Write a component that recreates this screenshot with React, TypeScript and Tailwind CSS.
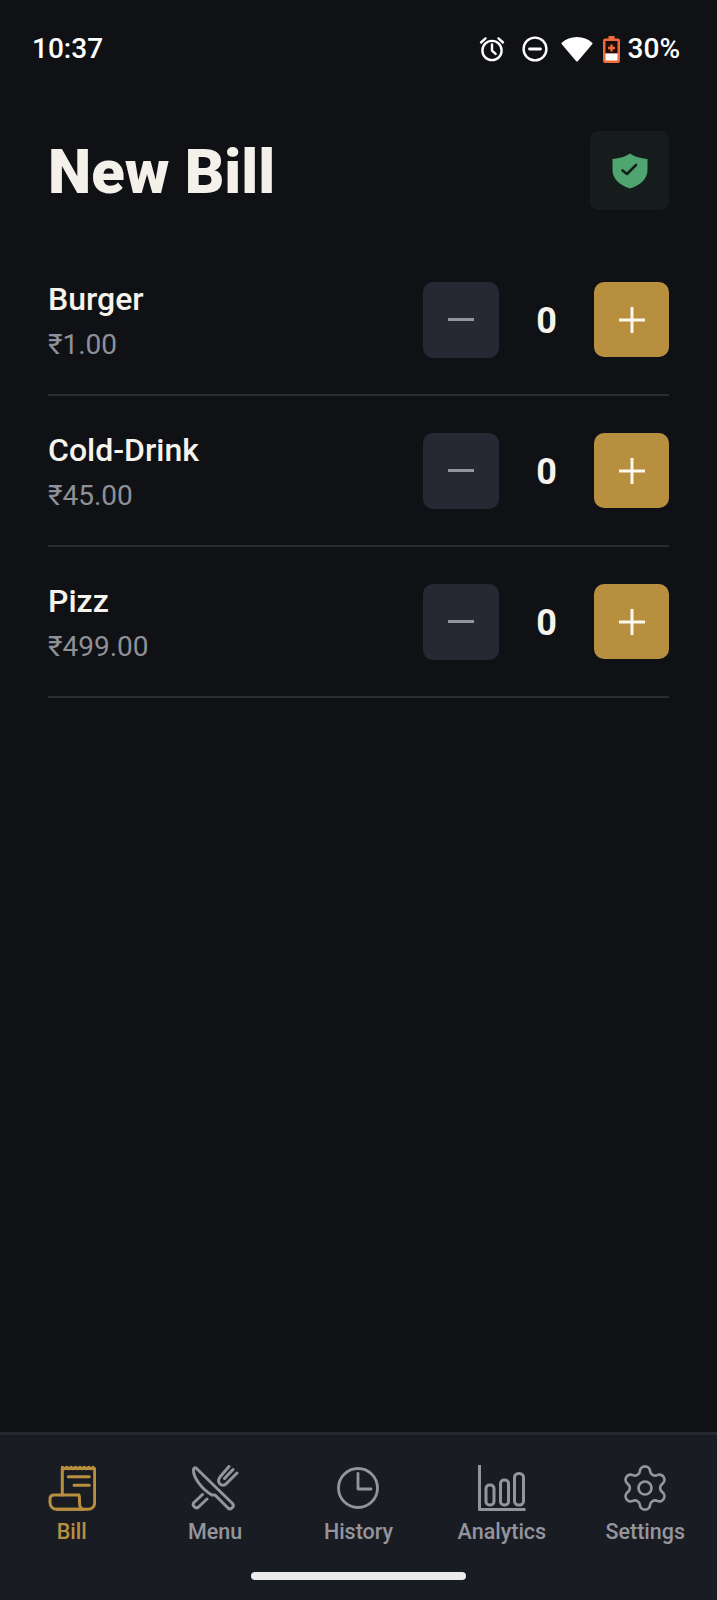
import { Settings } from 'lucide-react';

const items = [
  { name: 'Burger', price: '₹1.00' },
  { name: 'Cold-Drink', price: '₹45.00' },
  { name: 'Pizz', price: '₹499.00' },
];

function AlarmIcon() {
  return (
    <svg width="26" height="26" viewBox="0 0 26 26" fill="none" stroke="white" strokeWidth="2.4" strokeLinecap="round" strokeLinejoin="round">
      <circle cx="13" cy="14.5" r="9.6" />
      <path d="M13 8.5v6.2l3.6 3.2" />
      <path d="M2 6.500 6.500 2.400M24 6.500l-4.500-4.100" />
    </svg>
  );
}

function DndIcon() {
  return (
    <svg width="26" height="26" viewBox="0 0 26 26" fill="none" stroke="white" strokeWidth="2.4" strokeLinecap="round">
      <circle cx="13" cy="13" r="11.4" />
      <path d="M7.500 13h11" strokeWidth="2.8" />
    </svg>
  );
}

function WifiIcon() {
  return (
    <svg width="32" height="26" viewBox="0 0 32 26" fill="white">
      <path d="M16 1C10 1 4.800 3.200.8 6.800a1 1 0 0 0 0 1.400L15 25a1.400 1.400 0 0 0 2 0L31.200 8.200a1 1 0 0 0 0-1.400C27.200 3.200 22 1 16 1z" />
    </svg>
  );
}

function BatteryIcon() {
  return (
    <svg width="17" height="27" viewBox="0 0 17 27" fill="none">
      <path d="M5.500 0h6v2.500h3.500a2 2 0 0 1 2 2V25a2 2 0 0 1-2 2H2a2 2 0 0 1-2-2V4.500a2 2 0 0 1 2-2h3.500z" fill="#f0693a" />
      <rect x="2.500" y="5" width="12" height="12.500" fill="#1a0f0c" />
      <rect x="2.500" y="17.500" width="12" height="7" fill="#ffffff" />
      <path d="M8.500 8.500v7M5 12h7" stroke="#f0693a" strokeWidth="2.400" />
    </svg>
  );
}

function ShieldIcon() {
  return (
    <svg width="36" height="36" viewBox="0 0 36 36" fill="none">
      <path d="M18 .5C22 3.500 29 5.500 35.500 6V17C35.500 26 28 32.500 18 35.500 8 32.500.5 26 .5 17V6C7 5.500 14 3.500 18 .5z" fill="#4fa56f" />
      <path d="m10.500 17.500 4.500 3.500 9-9" stroke="#12201a" strokeWidth="2.600" strokeLinecap="round" strokeLinejoin="round" />
    </svg>
  );
}

function BillIcon() {
  return (
    <svg width="48" height="46" viewBox="0 0 48 46" fill="none" stroke="#b78f3f" strokeWidth="3" strokeLinecap="round" strokeLinejoin="round">
      <path d="M14.300 30V2.300l2.200 1.500 2.200-1.500 2.200 1.500 2.200-1.500 2.200 1.500 2.200-1.500 2.200 1.500 2.200-1.500 2.200 1.500 2.200-1.500 2.200 1.500 2.200-1.500 2.200 1.500 2.200-1.500 1.600 1.500V37c0 4.500-3 7.300-7 7.300H9" />
      <path d="M20.300 11.700h21M26 20.300h15.300" />
      <path d="M31 30H6c-2.500 0-4 1.500-4 4v3c0 4.500 3 7.300 7 7.300h26c-2.500-.8-3.500-3-3.500-6.500V34c0-2.500-.5-4-.5-4" />
    </svg>
  );
}

function MenuIcon() {
  return (
    <svg width="48" height="46" viewBox="0 0 48 46" fill="none" stroke="#94959c" strokeWidth="3" strokeLinecap="round" strokeLinejoin="round">
      <path d="M5 3 41.500 38.500a3.200 3.200 0 0 1-4.500 4.500L24 30h-3C12 25 2 13 2.500 4.500 2.700 3 4 2.400 5 3z" />
      <path d="M11.500 29.500 3 37.500a3.200 3.200 0 0 0 4.500 4.500l8.500-8" />
      <path d="M38 1.500 29 12c-2 3-2 5 0 7s4 1.500 6 0L46 8M42 4.500l-8.500 9" />
    </svg>
  );
}

function HistoryIcon() {
  return (
    <svg width="42" height="42" viewBox="0 0 42 42" fill="none" stroke="#94959c" strokeWidth="2.800" strokeLinecap="round" strokeLinejoin="round">
      <circle cx="21" cy="21" r="19.500" />
      <path d="M21 6.500V22h13" />
    </svg>
  );
}

function AnalyticsIcon() {
  return (
    <svg width="48" height="46" viewBox="0 0 48 46" fill="none" stroke="#94959c" strokeWidth="3" strokeLinecap="square" strokeLinejoin="round">
      <path d="M1.500 1v43.500H46" />
      <rect x="8" y="20" width="8" height="20" rx="3.500" />
      <rect x="22.500" y="15" width="8" height="25" rx="3.500" />
      <rect x="36.500" y="8.500" width="9" height="31.500" rx="4" />
    </svg>
  );
}

function NavItem({ label, active, icon }: { label: string; active?: boolean; icon: React.ReactNode }) {
  return (
    <div className="flex flex-col items-center">
      <div className="flex h-[46px] items-center justify-center">{icon}</div>
      <span className={`mt-[7px] text-[21.500px] leading-[28px] font-medium ${active ? 'text-[#b78f3f]' : 'text-[#94959c]'}`}>{label}</span>
    </div>
  );
}

function BillRow({ name, price }: { name: string; price: string }) {
  return (
    <div className="flex h-[151px] items-center justify-between border-b-2 border-[#2a2c33]">
      <div className="pt-[2px]">
        <p className="text-[32px] leading-[38px] font-medium text-[#f6f3ec]">{name}</p>
        <p className="mt-[10px] text-[28px] leading-[34px] text-[#8f9097]">{price}</p>
      </div>
      <div className="flex items-center">
        <button type="button" className="flex size-[76px] items-center justify-center rounded-[10px] bg-[#262933]">
          <span className="h-[3px] w-[26px] bg-[#94959c]" />
        </button>
        <span className="w-[95px] pt-[3px] text-center text-[36px] font-bold text-[#f6f3ec]">0</span>
        <button type="button" className="flex size-[75px] items-center justify-center rounded-[10px] bg-[#b78f3f]">
          <svg width="26" height="26" viewBox="0 0 26 26" stroke="#fbf8f0" strokeWidth="3">
            <path d="M13 0v26M0 13h26" />
          </svg>
        </button>
      </div>
    </div>
  );
}

export default function App() {
  return (
    <div className="flex h-[1600px] w-[717px] flex-col bg-[#0f1115] font-['Roboto',sans-serif]">
      <div className="flex h-[98px] items-center justify-between pr-[37px] pl-[32px] text-[28px] font-medium text-white">
        <span>10:37</span>
        <div className="flex items-center">
          <AlarmIcon />
          <span className="ml-[17px]"><DndIcon /></span>
          <span className="ml-[13px]"><WifiIcon /></span>
          <span className="ml-[10px]"><BatteryIcon /></span>
          <span className="ml-[8px]">30%</span>
        </div>
      </div>

      <div className="mt-[33px] flex items-center justify-between px-[48px]">
        <h1 className="h-[79px] pt-[2px] text-[61.500px] leading-[78px] font-black text-[#f4f1ea]">New Bill</h1>
        <div className="flex size-[79px] items-center justify-center rounded-[8px] bg-[#161b1c]">
          <ShieldIcon />
        </div>
      </div>

      <div className="mt-[35px] flex-1 px-[48px]">
        {items.map((item) => (
          <BillRow key={item.name} name={item.name} price={item.price} />
        ))}
      </div>

      <div className="relative h-[168px] border-t-[3px] border-[#262a30] bg-[#1a1c24] pt-[30px]">
        <div className="grid grid-cols-5">
          <NavItem label="Bill" active icon={<BillIcon />} />
          <NavItem label="Menu" icon={<MenuIcon />} />
          <NavItem label="History" icon={<HistoryIcon />} />
          <NavItem label="Analytics" icon={<AnalyticsIcon />} />
          <NavItem label="Settings" icon={<Settings size={52} strokeWidth={1.250} color="#94959c" />} />
        </div>
        <div className="absolute bottom-[20px] left-[251px] h-[8px] w-[215px] rounded-full bg-[#ececee]" />
      </div>
    </div>
  );
}
